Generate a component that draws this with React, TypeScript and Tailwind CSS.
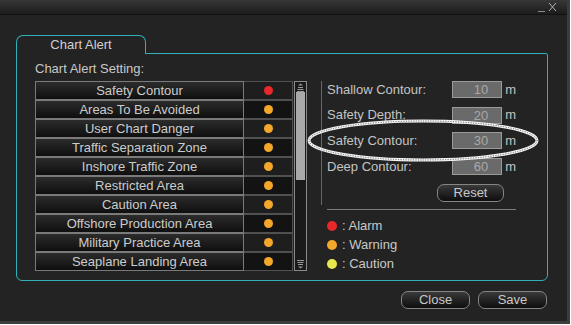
import React from 'react';

const alerts = [
  { name: 'Safety Contour', color: 'bg-[#e8282a]' },
  { name: 'Areas To Be Avoided', color: 'bg-[#f3a72b]' },
  { name: 'User Chart Danger', color: 'bg-[#f3a72b]' },
  { name: 'Traffic Separation Zone', color: 'bg-[#f3a72b]' },
  { name: 'Inshore Traffic Zone', color: 'bg-[#f3a72b]' },
  { name: 'Restricted Area', color: 'bg-[#f3a72b]' },
  { name: 'Caution Area', color: 'bg-[#f3a72b]' },
  { name: 'Offshore Production Area', color: 'bg-[#f3a72b]' },
  { name: 'Military Practice Area', color: 'bg-[#f3a72b]' },
  { name: 'Seaplane Landing Area', color: 'bg-[#f3a72b]' },
];

const contours = [
  { label: 'Shallow Contour:', value: 10 },
  { label: 'Safety Depth:', value: 20 },
  { label: 'Safety Contour:', value: 30 },
  { label: 'Deep Contour:', value: 60 },
];

function ScrollArrow({ down }: { down?: boolean }) {
  return (
    <svg width="9" height="9" viewBox="0 0 9 9" className={down ? 'rotate-180' : ''}>
      <path d="M4.5 0.5 L7 2.5 H2 Z" fill="#9a9a9a" />
      <path d="M2 4.5 H7 M1.5 6.5 H7.5 M1 8.5 H8" stroke="#9a9a9a" strokeWidth="1" />
    </svg>
  );
}

function DarkButton({ label, className }: { label: string; className: string }) {
  return (
    <div
      className={`flex items-center justify-center rounded-[7px] border border-[#858585] bg-linear-to-b from-[#3a3a3a] to-[#0e0e0e] text-[13px] text-[#c8c8c8] ${className}`}
    >
      {label}
    </div>
  );
}

export default function App() {
  return (
    <div className="w-[571px] h-[325px] bg-white overflow-hidden font-['Liberation_Sans',Arial,sans-serif]">
      <div className="relative flex flex-col w-[570px] h-[324px] bg-[#232323] border-r-[3px] border-b-[3px] border-[#3c3c3c]">
        {/* title bar */}
        <div className="h-[15px] shrink-0 flex items-end justify-end pr-[8px] bg-linear-to-b from-[#373737] to-[#1c1c1c] border-b border-[#121212]">
          <svg width="22" height="12" viewBox="0 0 22 12" className="mb-[1px]">
            <path d="M1 10.5 H8" stroke="#8a8a8a" strokeWidth="1" />
            <path d="M12 2 L19 10 M19 2 L12 10" stroke="#b0b0b0" strokeWidth="1" />
          </svg>
        </div>

        {/* tab */}
        <div className="ml-[16px] mt-[20px] relative z-10 -mb-px w-[130px] h-[19px] rounded-t-[7px] border border-b-0 border-[#2fb1b9] bg-[#232323] flex items-center justify-center text-[13px] text-[#d0d0d0]">
          Chart Alert
        </div>

        {/* panel */}
        <div className="ml-[16px] w-[532px] h-[228px] rounded-b-[6px] rounded-tr-[2px] border border-[#2fb1b9] pl-[18px] pt-[7px]">
          <div className="h-[15px] leading-[15px] text-[13px] text-[#c8c8c8]">Chart Alert Setting:</div>

          <div className="flex mt-[5px]">
            {/* alert list */}
            <div className="flex">
              <div className="flex flex-col w-[258px]">
                {alerts.map((a, i) => (
                  <div key={a.name} className="flex h-[19px]">
                    <div className="w-[209px] border border-[#7a7a7a] bg-linear-to-b from-[#2c2c2c] to-[#0f0f0f] flex items-center justify-center text-[13px] text-[#cccccc] whitespace-nowrap overflow-hidden">
                      {a.name}
                    </div>
                    <div
                      className={`w-[49px] border-y border-r border-[#505050] flex items-center justify-center ${
                        i % 2 === 0 ? 'bg-[#1e1e1e]' : 'bg-[#131313]'
                      }`}
                    >
                      <div className={`w-[9px] h-[9px] rounded-full ${a.color}`} />
                    </div>
                  </div>
                ))}
              </div>
              <div className="ml-[1px] w-[13px] h-[190px] border border-[#8a8a8a] bg-[#1a1a1a] flex flex-col items-center">
                <div className="h-[10px] flex items-center">
                  <ScrollArrow />
                </div>
                <div className="w-[9px] h-[88px] bg-[#a9a9a9]" />
                <div className="flex-1" />
                <div className="h-[11px] flex items-center">
                  <ScrollArrow down />
                </div>
              </div>
            </div>

            {/* depth settings */}
            <div className="ml-[14px] w-[195px]">
              <div className="h-[124px] mt-[1px] border-l border-[#676767] pl-[5px]">
                <div className="flex flex-col gap-[8.7px] -mt-[1px]">
                  {contours.map((c) => (
                    <div key={c.label} className="flex items-center h-[17px] text-[13px]">
                      <div className="w-[126px] text-[#c4c4c4]">{c.label}</div>
                      <div className="w-[51px] h-[17px] border border-[#9a9a9a] bg-[#6a6a6a] text-right pr-[13px] leading-[15px] text-[#a8a8a8]">
                        {c.value}
                      </div>
                      <div className="ml-[3px] text-[#c4c4c4]">m</div>
                    </div>
                  ))}
                </div>
                <DarkButton label="Reset" className="ml-[110px] mt-[9px] w-[67px] h-[18px]" />
              </div>
              <div className="ml-[6px] mt-[4px] h-px bg-[#7a7a7a]" />
              <div className="ml-[6px] mt-[6px] flex flex-col">
                {[
                  { c: 'bg-[#e8282a]', t: ': Alarm' },
                  { c: 'bg-[#f3a72b]', t: ': Warning' },
                  { c: 'bg-[#e7e84b]', t: ': Caution' },
                ].map((l) => (
                  <div key={l.t} className="flex items-center h-[19px] text-[13px] text-[#c8c8c8]">
                    <div className={`w-[10px] h-[10px] rounded-full ${l.c}`} />
                    <span className="ml-[5px]">{l.t}</span>
                  </div>
                ))}
              </div>
            </div>
          </div>
        </div>

        {/* footer buttons */}
        <div className="flex gap-[8px] pl-[401px] mt-[10px]">
          <DarkButton label="Close" className="w-[69px] h-[18px]" />
          <DarkButton label="Save" className="w-[69px] h-[18px]" />
        </div>

        {/* highlight ellipse annotation */}
        <svg className="absolute left-[307px] top-[119px]" width="232" height="43" viewBox="0 0 232 43">
          <ellipse cx="116" cy="21.5" rx="114" ry="19.5" fill="none" stroke="#f2f2f2" strokeWidth="3" />
          <ellipse cx="116" cy="21.5" rx="114" ry="19.5" fill="none" stroke="#5a5a5a" strokeWidth="1" strokeDasharray="1 1.5" />
        </svg>
      </div>
    </div>
  );
}
